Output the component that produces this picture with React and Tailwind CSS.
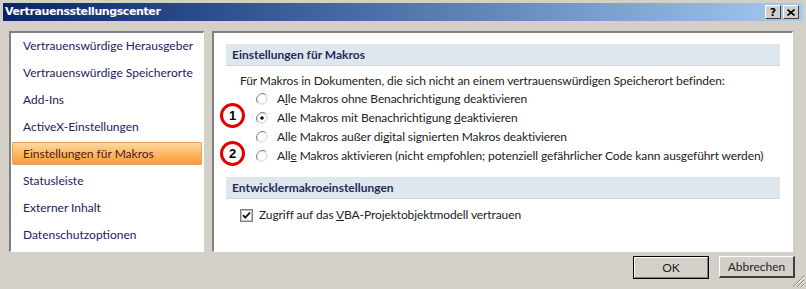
import React from "react";

const font = { fontFamily: "Lato, 'Noto Sans', sans-serif" };

function Radio({ checked }) {
  return (
    <svg width="12" height="12" viewBox="0 0 12 12" className="shrink-0">
      <path d="M10.2 1.8 A6 6 0 0 0 1.8 10.2" stroke="#808080" fill="none" strokeWidth="1" />
      <path d="M1.8 10.2 A6 6 0 0 0 10.2 1.8" stroke="#e8e8e8" fill="none" strokeWidth="1" />
      <circle cx="6" cy="6" r="4.6" fill="#fff" stroke="#c8c8c8" strokeWidth="0.6" />
      {checked && <circle cx="6" cy="6" r="1.8" fill="#111" />}
    </svg>
  );
}

function RadioRow({ checked, children }) {
  return (
    <div className="flex h-[19px] items-center pl-[42px]">
      <Radio checked={checked} />
      <span className="ml-[9px] text-[12px] tracking-[-0.1px] text-[#222]">{children}</span>
    </div>
  );
}

function U({ children }) {
  return <span className="underline [text-decoration-skip-ink:none]">{children}</span>;
}

function Header({ children }) {
  return (
    <div className="mx-[12px] flex h-[22px] items-center border-b border-[#cfd8e0] bg-[#dfe7ee] pl-[6px] text-[12px] font-bold text-[#1f2d5a]">
      {children}
    </div>
  );
}

const items = [
  "Vertrauenswürdige Herausgeber",
  "Vertrauenswürdige Speicherorte",
  "Add-Ins",
  "ActiveX-Einstellungen",
  "Einstellungen für Makros",
  "Statusleiste",
  "Externer Inhalt",
  "Datenschutzoptionen",
];

export default function App() {
  return (
    <div className="relative flex h-[289px] w-[806px] flex-col overflow-hidden bg-[#d4d0c8]" style={font}>
      {/* Title bar */}
      <div className="mx-[3px] mt-[3px] flex h-[18px] items-center bg-gradient-to-r from-[#0a246a] to-[#a6caf0] pl-[2px] pr-[4px]">
        <span
          className="text-[11px] font-bold tracking-[-0.4px] text-white"
          style={{ fontFamily: "'DejaVu Sans', Verdana, sans-serif" }}
        >
          Vertrauensstellungscenter
        </span>
        <div className="ml-auto flex gap-[1px]">
          <div className="flex h-[14px] w-[16px] items-center justify-center border-b border-r border-t border-l border-b-[#404040] border-r-[#404040] border-l-white border-t-white bg-[#d4d0c8] text-[11px] font-bold leading-none text-black" style={{ fontFamily: "'DejaVu Sans', sans-serif" }}>
            ?
          </div>
          <div className="ml-[1px] flex h-[14px] w-[16px] items-center justify-center border-b border-r border-t border-l border-b-[#404040] border-r-[#404040] border-l-white border-t-white bg-[#d4d0c8]">
            <svg width="8" height="7" viewBox="0 0 8 7">
              <path d="M0.5 0.5 L7.5 6.5 M7.5 0.5 L0.5 6.5" stroke="#000" strokeWidth="1.6" />
            </svg>
          </div>
        </div>
      </div>

      {/* Main content */}
      <div className="mt-[10px] flex h-[221px] pl-[9px]">
        {/* Left pane */}
        <div className="h-full w-[195px] border-l-2 border-t-2 border-b border-r border-l-[#808080] border-t-[#808080] border-b-white border-r-white bg-white">
          <div className="-mt-[1px] pl-[1px]">
            {items.map((it, i) =>
              i === 4 ? (
                <div key={it} className="flex h-[27px] items-center py-[2px] pr-[1px]">
                  <div className="flex h-[23px] w-full items-center rounded-[1px] border border-[#e5a25a] bg-gradient-to-b from-[#ffd89e] via-[#fcb862] to-[#fa9c3c] pl-[10px] text-[12px] text-[#4a1b22]">
                    {it}
                  </div>
                </div>
              ) : (
                <div key={it} className="flex h-[27px] items-center pl-[11px] text-[12px] text-[#23225e]">
                  {it}
                </div>
              )
            )}
          </div>
        </div>

        {/* Right pane */}
        <div className="ml-[8px] h-full w-[581px] border-l-2 border-t-2 border-b border-r border-l-[#808080] border-t-[#808080] border-b-white border-r-white bg-white">
          <div className="pt-[11px]">
            <Header>Einstellungen für Makros</Header>
            <div className="mt-[7px] h-[16px] pl-[26px] text-[12px] leading-[16px] tracking-[-0.1px] text-[#222]">
              Für Makros in Dokumenten, die sich nicht an einem vertrauenswürdigen Speicherort befinden:
            </div>
            <RadioRow>
              A<U>l</U>le Makros ohne Benachrichtigung deaktivieren
            </RadioRow>
            <RadioRow checked>
              Alle Makros mit Benachrichtigung <U>d</U>eaktivieren
            </RadioRow>
            <RadioRow>
              Alle Makros außer di<U>g</U>ital signierten Makros deaktivieren
            </RadioRow>
            <RadioRow>
              All<U>e</U> Makros aktivieren (nicht empfohlen; potenziell gefährlicher Code kann ausgeführt werden)
            </RadioRow>
            <div className="mt-[12px]">
              <Header>Entwicklermakroeinstellungen</Header>
            </div>
            <div className="mt-[7px] flex h-[18px] items-center pl-[26px]">
              <svg width="13" height="13" viewBox="0 0 13 13" className="shrink-0">
                <rect x="0.5" y="0.5" width="12" height="12" fill="#fff" stroke="#808080" />
                <rect x="1.5" y="1.5" width="10" height="10" fill="#fff" stroke="#c0c0c0" />
                <path d="M3 6.2 L5.2 8.6 L10 3.6" stroke="#111" strokeWidth="1.8" fill="none" />
              </svg>
              <span className="ml-[6px] text-[12px] tracking-[-0.1px] text-[#222]">
                Zugriff auf das <U>V</U>BA-Projektobjektmodell vertrauen
              </span>
            </div>
          </div>
        </div>
      </div>

      {/* Buttons */}
      <div className="mt-[4px] flex justify-end gap-[10px] pr-[11px]">
        <div className="h-[23px] w-[76px] border border-[#000]">
          <div className="flex h-full w-full items-center justify-center border-l border-t border-b border-r border-l-white border-t-white border-b-[#808080] border-r-[#808080] bg-[#d4d0c8] text-[12px] text-[#222]">
            OK
          </div>
        </div>
        <div className="flex h-[22px] w-[76px] items-center justify-center border-l border-t border-b-2 border-r-2 border-l-white border-t-white border-b-[#404040] border-r-[#404040] bg-[#d4d0c8] text-[12px] text-[#2a1f2f]">
          Abbrechen
        </div>
      </div>

      {/* Resize grip */}
      <svg className="absolute bottom-[1px] right-[1px]" width="13" height="13" viewBox="0 0 13 13">
        <path d="M12 1 L1 12 M12 5 L5 12 M12 9 L9 12" stroke="#808080" strokeWidth="1" />
        <path d="M12 2 L2 12 M12 6 L6 12 M12 10 L10 12" stroke="#fff" strokeWidth="1" />
      </svg>

      {/* Annotation circles */}
      <div className="absolute left-[220px] top-[103px] flex h-[25px] w-[25px] items-center justify-center rounded-full border-[3px] border-[#e00000] text-[13px] font-bold text-black" style={{ fontFamily: "'Liberation Sans', sans-serif" }}>
        1
      </div>
      <div className="absolute left-[220px] top-[141px] flex h-[25px] w-[25px] items-center justify-center rounded-full border-[3px] border-[#e00000] text-[13px] font-bold text-black" style={{ fontFamily: "'Liberation Sans', sans-serif" }}>
        2
      </div>
    </div>
  );
}
